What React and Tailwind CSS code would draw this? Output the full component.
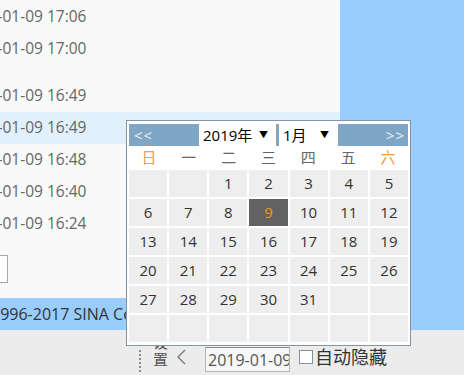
import React from "react"

const rows = [
    { t: "2019-01-09 17:06" },
    { t: "2019-01-09 17:00", gapAfter: true },
    { t: "2019-01-09 16:49" },
    { t: "2019-01-09 16:49", active: true },
    { t: "2019-01-09 16:48" },
    { t: "2019-01-09 16:40" },
    { t: "2019-01-09 16:24" },
]

const weekdays = ["日", "一", "二", "三", "四", "五", "六"]

// January 2019 starts on a Tuesday
const days = [
    "", "", 1, 2, 3, 4, 5,
    6, 7, 8, 9, 10, 11, 12,
    13, 14, 15, 16, 17, 18, 19,
    20, 21, 22, 23, 24, 25, 26,
    27, 28, 29, 30, 31, "", "",
    "", "", "", "", "", "", "",
]

function Calendar() {
    return (
        <div className="absolute left-[126px] top-[120px] w-[285px] border border-[#8494a4] bg-white px-[2px] pt-[3px] pb-[3px]">
            <div className="flex h-[22px] bg-[#7fa6c4]">
                <div className="w-[70px] pl-[5px] flex items-center text-[15px] tracking-[1px] text-[#e4eef8]">&lt;&lt;</div>
                <div className="w-[78px] bg-white border-r border-[#a0a0a0] flex items-center text-[15px] text-black">
                    <span className="ml-[4px]">2019年</span>
                    <span className="ml-auto mr-[8px] text-[9px]">▼</span>
                </div>
                <div className="ml-[2px] w-[59px] bg-white flex items-center text-[15px] text-black">
                    <span className="ml-[4px]">1月</span>
                    <span className="ml-auto mr-[9px] text-[9px]">▼</span>
                </div>
                <div className="flex-1 flex items-center justify-end pr-[3px] text-[15px] tracking-[1px] text-[#e4eef8]">&gt;&gt;</div>
            </div>
            <div className="grid grid-cols-7 h-[22px]">
                {weekdays.map((w, i) => (
                    <div
                        key={w}
                        className={
                            "flex items-center justify-center text-[15px] " +
                            (i === 0 || i === 6 ? "text-[#f39b45]" : "text-[#666]")
                        }
                    >
                        {w}
                    </div>
                ))}
            </div>
            <div className="grid grid-cols-7 gap-[2px] pt-[2px]">
                {days.map((d, i) => (
                    <div
                        key={i}
                        className={
                            "h-[27px] flex items-center justify-center text-[15px] " +
                            (d === 9 ? "bg-[#626262] text-[#f7941d]" : "bg-[#eeeeee] text-[#333]")
                        }
                    >
                        {d}
                    </div>
                ))}
            </div>
        </div>
    )
}

export default function App() {
    return (
        <div className="relative w-[464px] h-[375px] overflow-hidden font-['Open_Sans','Noto_Sans_CJK_SC',sans-serif]">
            <div className="flex h-[298px]">
                <div className="w-[340px] bg-[#f9f9f9] pt-[1px] overflow-hidden">
                    {rows.map((r, i) => (
                        <div
                            key={i}
                            className={
                                "h-[32px] flex items-center text-[15.5px] text-[#666] " +
                                (r.active ? "bg-[#e2f0fb] " : "") +
                                (r.gapAfter ? "mb-[15px]" : "")
                            }
                        >
                            <span className="-ml-[38px] whitespace-nowrap">{r.t}</span>
                        </div>
                    ))}
                    <div className="mt-[15px] -ml-[60px] w-[68px] h-[28px] border border-[#a8a8a8] bg-white" />
                </div>
                <div className="flex-1 bg-[#99ccff]" />
            </div>

            <div className="h-[32px] bg-[#99ccff] flex items-center overflow-hidden">
                <span className="-ml-[9px] whitespace-nowrap text-[16px] text-[#333]">1996-2017 SINA Corporation, All Rights Reserved</span>
            </div>

            <div className="h-[45px] bg-[#ececec] flex items-start overflow-hidden">
                <div className="ml-[139px] mt-[20px] flex flex-col gap-[2px]">
                    {[0, 1, 2, 3, 4, 5].map((k) => (
                        <div key={k} className="w-[2px] h-[2px] bg-[#8a8a8a]" />
                    ))}
                </div>
                <div className="ml-[12px] mt-[4px] flex flex-col text-[15px] leading-[17px] text-[#555]">
                    <span>设</span>
                    <span>置</span>
                </div>
                <svg className="ml-[8px] mt-[19px]" width="11" height="16" viewBox="0 0 11 16">
                    <polyline points="9,1 2,8 9,15" fill="none" stroke="#777" strokeWidth="1.4" />
                </svg>
                <div className="ml-[18px] mt-[17px] w-[85px] h-[25px] border border-[#b4b4b4] border-t-[#8c8c8c] bg-[#f7f7f7] overflow-hidden flex items-center">
                    <span className="ml-[2px] whitespace-nowrap text-[16px] text-[#555]">2019-01-09</span>
                </div>
                <div className="ml-[9px] mt-[20px] w-[14px] h-[14px] border border-[#8f8f8f] bg-white" />
                <span className="ml-[2px] mt-[15px] text-[18px] leading-[25px] text-[#333]">自动隐藏</span>
            </div>

            <Calendar />
        </div>
    )
}
